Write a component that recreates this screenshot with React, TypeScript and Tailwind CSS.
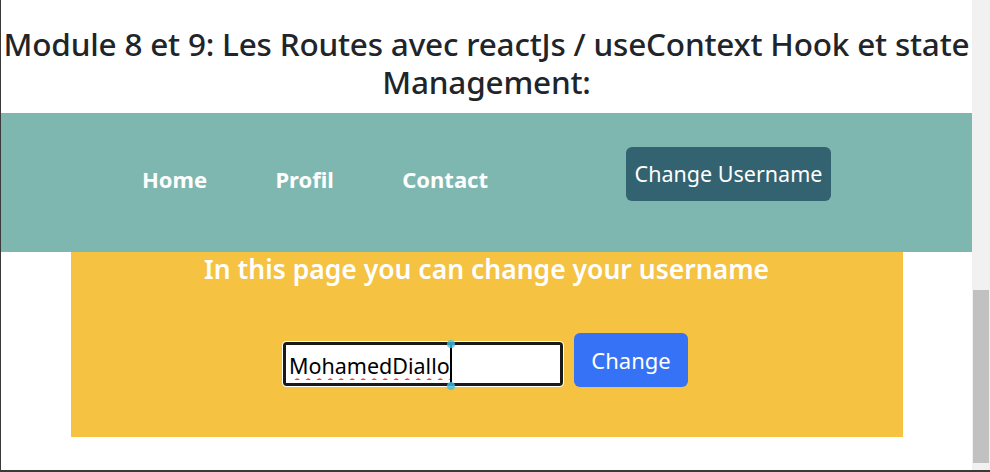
import React from "react";

export default function App() {
  const font = '"Noto Sans", "Open Sans", sans-serif';
  return (
    <div className="w-[990px] h-[472px] flex border-l border-b-2 border-[#3a3a3a] overflow-hidden bg-white" style={{ fontFamily: font }}>
      <div className="flex-1 flex flex-col">
        <h1 className="text-[31.5px] leading-[38px] text-center text-[#212529] font-medium pt-[25px] pb-[12px] tracking-[-0.2px]">
          Module 8 et 9: Les Routes avec reactJs / useContext Hook et state Management:
        </h1>
        <nav className="h-[139px] shrink-0 bg-[#7db7b0] flex items-center">
          <ul className="flex items-center justify-between w-[346px] text-white font-bold text-[22px] ml-[141px] -mt-[7px]">
            <li>Home</li>
            <li>Profil</li>
            <li>Contact</li>
          </ul>
          <button className="ml-[138px] -mt-[17px] h-[54px] w-[205px] rounded-[6px] bg-[#336270] text-white text-[21.5px] whitespace-nowrap">
            Change Username
          </button>
        </nav>
        <div className="mx-auto w-[832px] h-[185px] shrink-0 bg-[#f5c242] flex flex-col items-center">
          <h2 className="text-white font-semibold text-[26.5px] leading-[36px] -mt-[1px]">
            In this page you can change your username
          </h2>
          <div className="flex items-end gap-[11px] mt-[46px] -ml-[2px]">
            <div className="relative mb-[1px]">
              <input
                defaultValue="MohamedDiallo"
                spellCheck={false}
                className="w-[280px] h-[44px] border-[3px] border-[#1a1a1a] rounded-[3px] bg-white outline outline-1 outline-white text-[21.5px] text-black pl-[3px] pt-[3px] underline decoration-wavy decoration-[#ff3b3b] decoration-[1.5px] underline-offset-[4px]"
                style={{ fontFamily: font }}
              />
              <span className="absolute left-[167px] top-[2px] w-[2px] h-[40px] bg-black" />
              <span className="absolute left-[164px] top-[-2px] w-[8px] h-[8px] rounded-full bg-[#3ec0e6] opacity-80" />
              <span className="absolute left-[164px] bottom-[-4px] w-[8px] h-[8px] rounded-full bg-[#3ec0e6] opacity-80" />
            </div>
            <button className="w-[114px] h-[54px] rounded-[6px] bg-[#3672f5] text-white text-[22px]">
              Change
            </button>
          </div>
        </div>
      </div>
      <div className="w-[18px] h-full bg-[#f1f1f1] flex flex-col">
        <div className="mt-[290px] h-[173px] mx-[1px] bg-[#c1c1c1]" />
      </div>
    </div>
  );
}
